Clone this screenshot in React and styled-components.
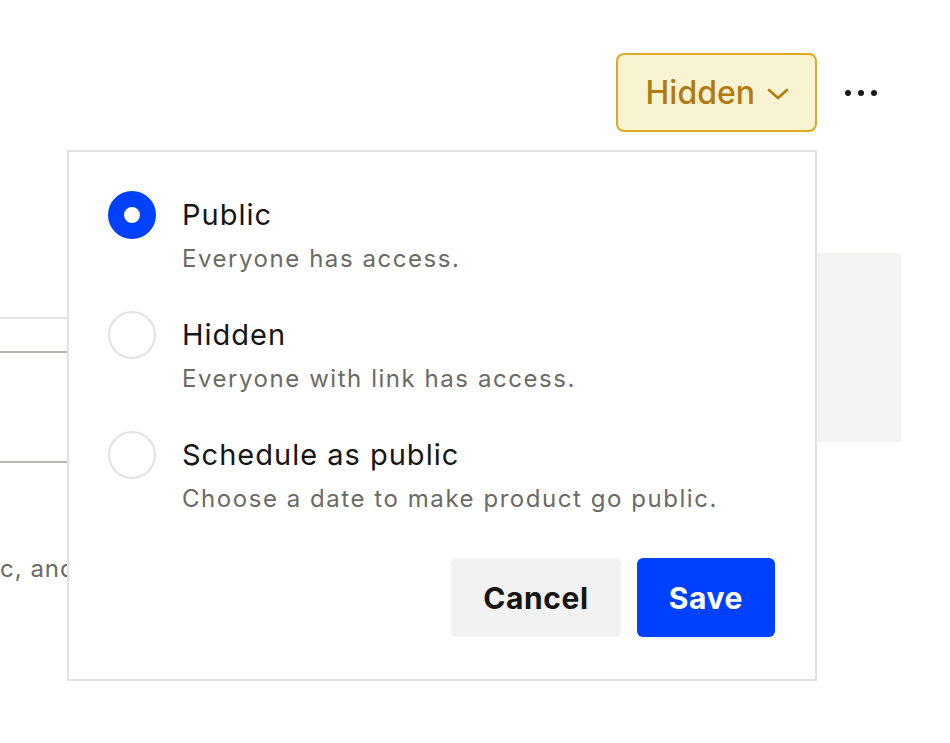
import { useState } from "react";
import styled, { createGlobalStyle } from "styled-components";

const GlobalStyle = createGlobalStyle`
  html, body {
    margin: 0;
    padding: 0;
    background: #ffffff;
    font-family: Inter, "Noto Sans", sans-serif;
    overflow: hidden;
  }
`;

const options = [
  { id: "public", title: "Public", text: "Everyone has access." },
  { id: "hidden", title: "Hidden", text: "Everyone with link has access." },
  {
    id: "scheduled",
    title: "Schedule as public",
    text: "Choose a date to make product go public.",
  },
];

export default function App() {
  const [selected, setSelected] = useState("public");

  return (
    <Page>
      <GlobalStyle />
      <Header>
        <MenuAnchor>
          <StatusButton type="button">
            Hidden
            <svg width="22" height="14" viewBox="0 0 22 14" fill="none">
              <path
                d="M2 3l9 8 9-8"
                stroke="currentColor"
                strokeWidth="2.6"
                strokeLinecap="round"
                strokeLinejoin="round"
              />
            </svg>
          </StatusButton>
          <Popover>
            <OptionList>
              {options.map((opt) => (
                <Option key={opt.id} onClick={() => setSelected(opt.id)}>
                  <Radio $checked={selected === opt.id} />
                  <OptionText>
                    <OptionTitle>{opt.title}</OptionTitle>
                    <OptionHint>{opt.text}</OptionHint>
                  </OptionText>
                </Option>
              ))}
            </OptionList>
            <Actions>
              <ActionButton type="button">Cancel</ActionButton>
              <ActionButton type="button" $primary>
                Save
              </ActionButton>
            </Actions>
          </Popover>
        </MenuAnchor>
        <MoreButton type="button" aria-label="More">
          <svg width="34" height="8" viewBox="0 0 34 8">
            <circle cx="4" cy="4" r="3" fill="#1a1a1a" />
            <circle cx="17" cy="4" r="3" fill="#1a1a1a" />
            <circle cx="30" cy="4" r="3" fill="#1a1a1a" />
          </svg>
        </MoreButton>
      </Header>
      <Content>
        <FormColumn>
          <Rule $light />
          <Rule $gap={32} />
          <Rule $gap={108} />
          <Note>c, and others can find it in Discover.</Note>
        </FormColumn>
        <PreviewColumn>
          <PreviewBox />
        </PreviewColumn>
      </Content>
    </Page>
  );
}

// STYLED COMPONENTS

const Page = styled.div`
  width: 950px;
  height: 743px;
  position: relative;
`;

const Header = styled.div`
  display: flex;
  justify-content: flex-end;
  align-items: center;
  padding: 53px 72px 0 0;
  gap: 27px;
`;

const MenuAnchor = styled.div`
  position: relative;
`;

const StatusButton = styled.button`
  display: flex;
  align-items: center;
  gap: 12px;
  height: 79px;
  padding: 0 26px 0 28px;
  border: 2px solid #e2a823;
  border-radius: 8px;
  background: #f8f4d2;
  color: #b07a0e;
  font-family: Inter, sans-serif;
  font-size: 32px;
  font-weight: 500;
  cursor: pointer;
  svg {
    margin-top: 3px;
  }
`;

const MoreButton = styled.button`
  display: flex;
  align-items: center;
  border: none;
  background: none;
  padding: 0;
  cursor: pointer;
`;

const Popover = styled.div`
  position: absolute;
  top: calc(100% + 18px);
  right: 0;
  width: 750px;
  box-sizing: border-box;
  padding: 39px 40px 42px 39px;
  border: 2px solid #e2e2e2;
  background: #ffffff;
  z-index: 10;
`;

const OptionList = styled.div`
  display: flex;
  flex-direction: column;
  gap: 36px;
`;

const Option = styled.label`
  display: flex;
  align-items: flex-start;
  gap: 26px;
  cursor: pointer;
`;

const Radio = styled.span`
  flex: none;
  width: 48px;
  height: 48px;
  box-sizing: border-box;
  border-radius: 50%;
  border: ${(p) => (p.$checked ? "16px solid #0041ff" : "2px solid #e2e2e2")};
  background: ${(p) => (p.$checked ? "#fcfbfa" : "#ffffff")};
`;

const OptionText = styled.div`
  display: flex;
  flex-direction: column;
  gap: 4px;
`;

const OptionTitle = styled.span`
  font-size: 29px;
  line-height: 48px;
  letter-spacing: 1px;
  color: #161616;
`;

const OptionHint = styled.span`
  font-size: 24px;
  line-height: 32px;
  letter-spacing: 1.55px;
  color: #6b6a64;
`;

const Actions = styled.div`
  display: flex;
  justify-content: flex-end;
  gap: 16px;
  margin-top: 43px;
`;

const ActionButton = styled.button`
  height: 79px;
  padding: 0 32px;
  border: none;
  border-radius: 6px;
  background: ${(p) => (p.$primary ? "#0041ff" : "#f2f2f2")};
  color: ${(p) => (p.$primary ? "#ffffff" : "#161616")};
  font-family: Inter, sans-serif;
  font-size: 30px;
  font-weight: 700;
  letter-spacing: 0.6px;
  cursor: pointer;
`;

const Content = styled.div`
  display: grid;
  grid-template-columns: 600px 301px;
  padding-top: 121px;
`;

const FormColumn = styled.div`
  display: flex;
  flex-direction: column;
  padding-top: 64px;
`;

const Rule = styled.div`
  height: 2px;
  margin-top: ${(p) => p.$gap || 0}px;
  background: ${(p) => (p.$light ? "#e4e4e2" : "#b4b4ae")};
`;

const Note = styled.p`
  margin: 91px 0 0;
  font-size: 24px;
  letter-spacing: 1px;
  color: #6b6a64;
  white-space: nowrap;
`;

const PreviewColumn = styled.div`
  display: flex;
  justify-content: flex-end;
`;

const PreviewBox = styled.div`
  width: 300px;
  height: 189px;
  background: #f4f3f1;
`;
